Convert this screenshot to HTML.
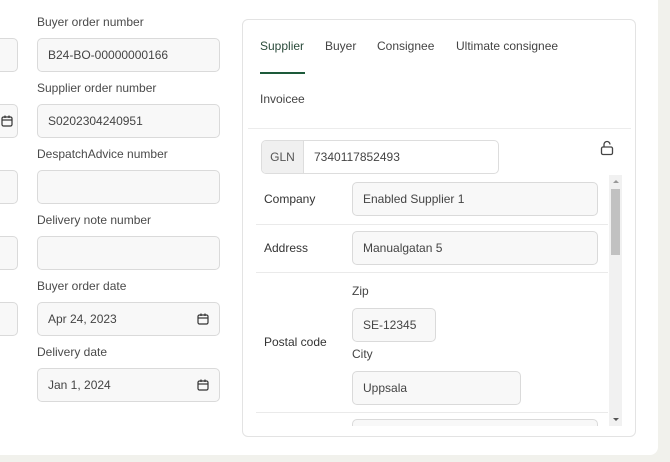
<!DOCTYPE html>
<html><head><style>
*{box-sizing:border-box;margin:0;padding:0}
body{width:670px;height:462px;background:#f1f1ec;font-family:"Liberation Sans",sans-serif;color:#333;position:relative;overflow:hidden}
.page{position:absolute;left:0;top:0;width:658px;height:455px;background:#fff;border-bottom-right-radius:8px}
.lbl{position:absolute;font-size:12px;color:#4a4a4a}
.inp{position:absolute;height:34px;background:#f8f8f8;border:1px solid #dadada;border-radius:5px;font-size:12px;color:#444;padding-left:10px;line-height:32px}
.cal{position:absolute;right:10px;top:10px;width:12px;height:12px}
.panel{position:absolute;left:242px;top:19px;width:394px;height:418px;border:1px solid #e3e3e3;border-radius:6px}
.tab{position:absolute;font-size:12px;color:#444}
</style></head><body>
<div class="page">
<div class="inp" style="left:-10px;top:38px;width:28px"></div>
<div class="inp" style="left:-10px;top:104px;width:28px"><svg class="cal" style="right:4px" viewBox="0 0 12 12"><rect x="1" y="2" width="10" height="9" rx="1.5" fill="none" stroke="#333" stroke-width="1.2"/><line x1="1" y1="5" x2="11" y2="5" stroke="#333" stroke-width="1.2"/><line x1="4" y1="0.5" x2="4" y2="3" stroke="#333" stroke-width="1.2"/><line x1="8" y1="0.5" x2="8" y2="3" stroke="#333" stroke-width="1.2"/></svg></div>
<div class="inp" style="left:-10px;top:170px;width:28px"></div>
<div class="inp" style="left:-10px;top:236px;width:28px"></div>
<div class="inp" style="left:-10px;top:302px;width:28px"></div>

<div class="lbl" style="left:37px;top:15px">Buyer order number</div>
<div class="inp" style="left:37px;top:38px;width:183px">B24-BO-00000000166</div>
<div class="lbl" style="left:37px;top:81px">Supplier order number</div>
<div class="inp" style="left:37px;top:104px;width:183px">S0202304240951</div>
<div class="lbl" style="left:37px;top:147px">DespatchAdvice number</div>
<div class="inp" style="left:37px;top:170px;width:183px"></div>
<div class="lbl" style="left:37px;top:213px">Delivery note number</div>
<div class="inp" style="left:37px;top:236px;width:183px"></div>
<div class="lbl" style="left:37px;top:279px">Buyer order date</div>
<div class="inp" style="left:37px;top:302px;width:183px">Apr 24, 2023<svg class="cal" viewBox="0 0 12 12"><rect x="1" y="2" width="10" height="9" rx="1.5" fill="none" stroke="#333" stroke-width="1.2"/><line x1="1" y1="5" x2="11" y2="5" stroke="#333" stroke-width="1.2"/><line x1="4" y1="0.5" x2="4" y2="3" stroke="#333" stroke-width="1.2"/><line x1="8" y1="0.5" x2="8" y2="3" stroke="#333" stroke-width="1.2"/></svg></div>
<div class="lbl" style="left:37px;top:345px">Delivery date</div>
<div class="inp" style="left:37px;top:368px;width:183px">Jan 1, 2024<svg class="cal" viewBox="0 0 12 12"><rect x="1" y="2" width="10" height="9" rx="1.5" fill="none" stroke="#333" stroke-width="1.2"/><line x1="1" y1="5" x2="11" y2="5" stroke="#333" stroke-width="1.2"/><line x1="4" y1="0.5" x2="4" y2="3" stroke="#333" stroke-width="1.2"/><line x1="8" y1="0.5" x2="8" y2="3" stroke="#333" stroke-width="1.2"/></svg></div>
</div>

<div class="panel">
<div class="tab" style="left:17px;top:19px;color:#2a4a3a">Supplier</div>
<div style="position:absolute;left:17px;top:52px;width:45px;height:2px;background:#1d5a3a"></div>
<div class="tab" style="left:82px;top:19px">Buyer</div>
<div class="tab" style="left:134px;top:19px">Consignee</div>
<div class="tab" style="left:213px;top:19px">Ultimate consignee</div>
<div class="tab" style="left:17px;top:72px">Invoicee</div>
<div style="position:absolute;left:5px;top:108px;width:383px;height:1px;background:#ececec"></div>
<div style="position:absolute;left:18px;top:120px;width:238px;height:34px;border:1px solid #ddd;border-radius:5px;overflow:hidden;font-size:12px;line-height:32px">
<div style="position:absolute;left:0;top:0;width:42px;height:32px;background:#f0f0f0;border-right:1px solid #ddd;text-align:center;color:#555">GLN</div>
<div style="position:absolute;left:52px;top:0;color:#444">7340117852493</div></div>
<svg style="position:absolute;left:357px;top:120px" width="14" height="16" viewBox="0 0 14 16"><path d="M4 7V4.5a3 3 0 0 1 6 0" fill="none" stroke="#444" stroke-width="1.3"/><rect x="1.5" y="7" width="11" height="7.5" rx="1.5" fill="none" stroke="#444" stroke-width="1.3"/></svg>

<div style="position:absolute;left:13px;top:155px;width:366px;height:251px;overflow:hidden">
<div style="position:absolute;left:0;top:49px;width:352px;height:1px;background:#eaeaea"></div>
<div style="position:absolute;left:0;top:97px;width:352px;height:1px;background:#eaeaea"></div>
<div style="position:absolute;left:0;top:237px;width:352px;height:1px;background:#eaeaea"></div>
<div class="tab" style="left:8px;top:17px;color:#333">Company</div>
<div class="inp" style="left:96px;top:7px;width:246px">Enabled Supplier 1</div>
<div class="tab" style="left:8px;top:66px;color:#333">Address</div>
<div class="inp" style="left:96px;top:56px;width:246px">Manualgatan 5</div>
<div class="tab" style="left:8px;top:160px;color:#333">Postal code</div>
<div class="tab" style="left:96px;top:109px">Zip</div>
<div class="inp" style="left:96px;top:133px;width:84px">SE-12345</div>
<div class="tab" style="left:96px;top:172px">City</div>
<div class="inp" style="left:96px;top:196px;width:169px">Uppsala</div>
<div class="inp" style="left:96px;top:244px;width:246px"></div>
<div style="position:absolute;left:353px;top:0;width:13px;height:251px;background:#f1f1f1">
<div style="position:absolute;left:2px;top:14px;width:9px;height:66px;background:#c1c1c1"></div>
<div style="position:absolute;left:4px;top:5px;border:3px solid transparent;border-bottom-color:#999;border-top:0"></div>
<div style="position:absolute;left:4px;bottom:5px;border:3px solid transparent;border-top-color:#555;border-bottom:0"></div>
</div>
</div>
</div>
</body></html>
